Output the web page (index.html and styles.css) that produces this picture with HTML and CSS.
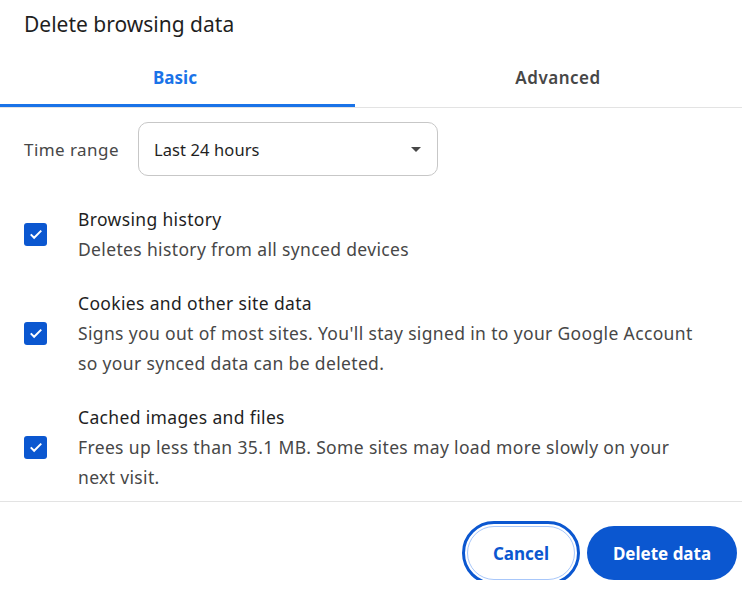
FILE: index.html
```html
<!DOCTYPE html>
<html lang="en">
<head>
<meta charset="UTF-8">
<meta name="viewport" content="width=device-width, initial-scale=1.0">
<title>Delete browsing data</title>
<link rel="stylesheet" href="styles.css">
</head>
<body>

<div class="dialog">
    <h1 class="dialog-title">Delete browsing data</h1>

    <div class="tabs">
        <div class="tab active">Basic</div>
        <div class="tab">Advanced</div>
    </div>

    <div class="content">
        <div class="time-range">
            <span class="time-label">Time range</span>
            <div class="select">
                <span>Last 24 hours</span>
                <span class="caret"></span>
            </div>
        </div>

        <div class="option">
            <span class="checkbox">
                <svg viewBox="0 0 24 24" width="18" height="18"><path d="M5 12.5l4.5 4.5L19 7.5" fill="none" stroke="#fff" stroke-width="2.6"/></svg>
            </span>
            <div class="option-text">
                <div class="option-title">Browsing history</div>
                <div class="option-desc">Deletes history from all synced devices</div>
            </div>
        </div>

        <div class="option">
            <span class="checkbox">
                <svg viewBox="0 0 24 24" width="18" height="18"><path d="M5 12.5l4.5 4.5L19 7.5" fill="none" stroke="#fff" stroke-width="2.6"/></svg>
            </span>
            <div class="option-text">
                <div class="option-title">Cookies and other site data</div>
                <div class="option-desc">Signs you out of most sites. You'll stay signed in to your Google Account so your synced data can be deleted.</div>
            </div>
        </div>

        <div class="option">
            <span class="checkbox">
                <svg viewBox="0 0 24 24" width="18" height="18"><path d="M5 12.5l4.5 4.5L19 7.5" fill="none" stroke="#fff" stroke-width="2.6"/></svg>
            </span>
            <div class="option-text">
                <div class="option-title">Cached images and files</div>
                <div class="option-desc">Frees up less than 35.1 MB. Some sites may load more slowly on your next visit.</div>
            </div>
        </div>
    </div>

    <div class="footer">
        <button class="btn btn-cancel">Cancel</button>
        <button class="btn btn-primary">Delete data</button>
    </div>
</div>

</body>
</html>
```

FILE: styles.css
```css
body {
    margin: 0;
    background: #fff;
    font-family: "Noto Sans", "Open Sans", sans-serif;
    overflow: hidden;
}
.dialog {
    width: 742px;
}
.dialog-title {
    margin: 0;
    padding: 10px 0 0 24px;
    font-size: 21px;
    line-height: 28px;
    font-weight: 400;
    color: #1f1f1f;
}
.tabs {
    display: grid;
    grid-template-columns: 355px 406px;
    margin-top: 14px;
    border-bottom: 1px solid #e3e3e3;
}
.tab {
    height: 52px;
    line-height: 52px;
    text-align: center;
    font-size: 17px;
    font-weight: 600;
    letter-spacing: 0.5px;
    color: #474747;
    border-bottom: 3px solid transparent;
}
.tab.active {
    padding-right: 5px;
    color: #1a73e8;
    font-weight: 700;
    letter-spacing: 0;
    border-bottom-color: #1a73e8;
    border-radius: 0 3px 0 0;
}
.content {
    padding-bottom: 9px;
}
.time-range {
    display: flex;
    align-items: center;
    margin-top: 14px;
    padding-left: 24px;
}
.time-label {
    width: 114px;
    font-size: 17px;
    letter-spacing: 0.45px;
    color: #474747;
}
.select {
    box-sizing: border-box;
    width: 300px;
    height: 54px;
    border: 1px solid #c7c7c7;
    border-radius: 10px;
    display: flex;
    align-items: center;
    justify-content: space-between;
    padding: 0 16px 0 15px;
    font-size: 16.5px;
    letter-spacing: 0.1px;
    color: #1f1f1f;
}
.caret {
    width: 0;
    height: 0;
    border-left: 5px solid transparent;
    border-right: 5px solid transparent;
    border-top: 5px solid #474747;
}
.option {
    display: flex;
    align-items: center;
    gap: 31px;
    padding-left: 24px;
    margin-top: 24px;
}
.time-range + .option {
    margin-top: 28px;
}
.checkbox {
    flex: none;
    width: 23px;
    height: 23px;
    border-radius: 3px;
    background: #0b57d0;
    display: flex;
    align-items: center;
    justify-content: center;
}
.option-text {
    width: 625px;
    font-size: 17.5px;
    letter-spacing: 0.35px;
    line-height: 30px;
}
.option-title {
    color: #1f1f1f;
}
.option-desc {
    color: #474747;
}
.footer {
    border-top: 1px solid #e3e3e3;
    display: flex;
    justify-content: flex-end;
    gap: 12px;
    padding: 24px 5px 0 0;
}
.btn {
    box-sizing: border-box;
    height: 54px;
    border-radius: 27px;
    font-family: inherit;
    font-size: 17px;
    font-weight: 700;
    cursor: pointer;
}
.btn-cancel {
    width: 108px;
    background: #fff;
    color: #0b57d0;
    border: 1px solid #a8c7fa;
    outline: 3px solid #0b57d0;
    outline-offset: 2px;
}
.btn-primary {
    width: 150px;
    background: #0b57d0;
    color: #fff;
    border: none;
}
```
